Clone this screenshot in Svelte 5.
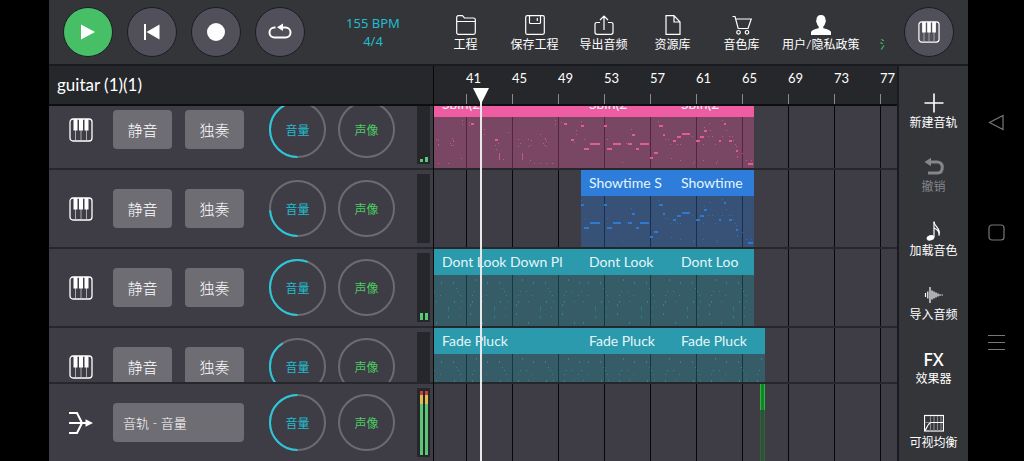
<script lang="ts">
  type Note = number[];

  let selectedTrack = "guitar (1)(1)";
  let playing = false;

  const bars = [41, 45, 49, 53, 57, 61, 65, 69, 73, 77];

  // x, y, width, height inside a clip
  const introNotes: Note[] = [
    [28, 29], [28, 33], [35, 31], [37, 32, 3], [35, 34], [121, 29], [121, 33],
    [127, 31], [130, 32, 3], [2, 48], [4, 49], [4, 53, 1, 2], [16, 52], [18, 47],
    [19, 49, 1, 2], [19, 54], [17, 54], [50, 38], [50, 43], [61, 48, 3],
    [64, 52], [61, 54], [62, 58], [65, 62, 1, 7], [69, 68], [74, 41], [84, 48],
    [86, 52], [84, 55], [94, 48], [97, 49], [96, 54], [94, 55], [88, 62, 1, 7],
    [96, 69], [109, 52], [111, 47, 1, 2], [112, 50], [112, 55], [110, 54],
    [106, 43], [137, 48, 3], [140, 51], [142, 39], [142, 43], [4, 72], [14, 72],
    [27, 67], [100, 72], [106, 72], [112, 72], [118, 72],
  ];
  const verseNotes: Note[] = [
    [0, 30], [0, 34, 3], [23, 34, 3], [51, 43, 3], [9, 52, 10], [32, 52, 8],
    [45, 52], [47, 52, 4], [59, 52, 9], [3, 57, 5], [26, 57, 5], [55, 57, 3],
    [73, 61, 4], [69, 66, 3], [77, 30], [78, 34, 4], [82, 43, 2], [84, 48],
    [87, 48], [89, 53], [90, 67], [41, 71], [50, 38], [3, 48], [26, 48],
  ];
  const endNotes: Note[] = [
    [0, 49, 3], [4, 45, 4], [4, 53], [7, 53], [9, 42, 8], [19, 45], [23, 49, 4],
    [27, 45, 4], [30, 53], [31, 39, 3], [31, 36], [36, 32], [37, 39], [35, 45],
    [39, 45], [42, 53], [46, 49, 2], [49, 45], [49, 29], [51, 32, 2], [53, 39],
    [56, 45], [59, 45], [56, 49, 3], [60, 49], [62, 53], [63, 55], [63, 59, 2],
    [64, 65, 1, 2], [69, 62], [75, 72, 5], [73, 69], [78, 69], [21, 70],
    [20, 72], [44, 70], [43, 72], [7, 69], [30, 69],
  ];
  const loopNotes: Note[] = [
    [7, 33, 1, 2], [19, 33, 1, 2], [42, 30, 1, 2], [22, 39], [0, 42], [24, 42],
    [40, 42], [6, 46], [26, 46], [38, 46], [2, 52], [20, 52, 1, 2], [27, 52],
    [38, 52, 1, 2], [14, 58, 1, 2], [25, 58], [36, 55, 1, 2], [2, 73, 1, 2],
    [14, 67, 1, 2], [25, 67], [36, 64, 1, 2], [14, 61],
  ];

  const repeat = (width: number): Note[] => {
    const notes: Note[] = [];
    for (let x = 0; x < width; x += 46) {
      for (const [nx, ...rest] of loopNotes) notes.push([nx + x, ...rest]);
    }
    return notes;
  };

  const tracks = [
    {
      volume: 0.45,
      levels: [3, 5],
      color: "pink",
      start: 0,
      clips: [
        { name: "Sbin(2", width: 147, notes: introNotes },
        { name: "Sbin(2", width: 92, notes: verseNotes },
        { name: "Sbin(2", width: 81, notes: endNotes },
      ],
    },
    {
      volume: 0.24,
      levels: [0, 0],
      color: "blue",
      start: 147,
      clips: [
        { name: "Showtime S", width: 92, notes: verseNotes },
        { name: "Showtime", width: 81, notes: endNotes },
      ],
    },
    {
      volume: 0.56,
      levels: [7, 7],
      color: "teal",
      start: 0,
      clips: [
        { name: "Dont Look Down Pl", width: 147, notes: repeat(147) },
        { name: "Dont Look", width: 92, notes: repeat(92) },
        { name: "Dont Loo", width: 81, notes: repeat(81) },
      ],
    },
    {
      volume: 0.41,
      levels: [0, 0],
      color: "teal",
      start: 0,
      clips: [
        { name: "Fade Pluck", width: 147, notes: repeat(147) },
        { name: "Fade Pluck", width: 92, notes: repeat(92) },
        { name: "Fade Pluck", width: 92, notes: repeat(92) },
      ],
    },
  ];

  const menu = [
    { icon: "folder", label: "工程" },
    { icon: "save", label: "保存工程" },
    { icon: "export", label: "导出音频" },
    { icon: "file", label: "资源库" },
    { icon: "cart", label: "音色库" },
    { icon: "user", label: "用户/隐私政策" },
  ];

  const tools = [
    { icon: "plus", label: "新建音轨" },
    { icon: "undo", label: "撤销", disabled: true },
    { icon: "note", label: "加载音色" },
    { icon: "wave", label: "导入音频" },
    { icon: "fx", label: "效果器" },
    { icon: "eq", label: "可视均衡" },
  ];
</script>

{#snippet piano(size: number)}
  <svg class="piano" viewBox="0 0 24 24" width={size} height={size}>
    <rect x="1" y="1" width="22" height="22" rx="3" fill="none" stroke="#fff" stroke-width="1.3" />
    <path d="M6.5 12v10M12 12v10M17.5 12v10" stroke="#aaa" stroke-width="1" />
    <path d="M4.5 1h4v11.500h-4zM10 1h4v11.500h-4zM15.500 1h4v11.500h-4z" fill="#fff" />
  </svg>
{/snippet}

{#snippet knob(label: string, kind: string, value: number)}
  <label class="knob {kind}">
    <input type="range" min="0" max="1" step="0.01" {value} />
    <svg viewBox="0 0 57 57" width="57" height="57">
      <circle cx="28.5" cy="28.5" r="27.5" />
      {#if value > 0}
        <circle
          class="arc"
          cx="28.5"
          cy="28.5"
          r="27.5"
          pathLength="100"
          stroke-dasharray="{value * 100} 100"
          transform="rotate(90 28.5 28.5)"
        />
      {/if}
    </svg>
    <span>{label}</span>
  </label>
{/snippet}

{#snippet icon(name: string)}
  <svg class="icon" viewBox="0 0 20 20" width="20" height="20">
    {#if name === "folder"}
      <path d="M.7 17.500V2.500Q.7.700 2.500.700H6.500L8.500 3H17.500Q19.300 3 19.300 4.800V17.500Q19.300 19.300 17.500 19.300H2.500Q.7 19.300.7 17.500zM.7 6.500H19.300" />
    {:else if name === "save"}
      <rect x=".7" y=".7" width="18.600" height="18.600" rx="1.500" />
      <path d="M4.500.7V7.500Q4.500 8.500 5.500 8.500H14.500Q15.500 8.500 15.500 7.500V.7M12.300 3V6" />
    {:else if name === "export"}
      <path d="M6 7.500H3Q1 7.500 1 9.500V17.300Q1 19.300 3 19.300H17Q19 19.300 19 17.300V9.500Q19 7.500 17 7.500H14M10 15V1M6 5L10 1L14 5" />
    {:else if name === "file"}
      <path d="M3 .7H11L17 7V19.300H3zM11 .7V7H17" />
    {:else if name === "cart"}
      <path d="M.5 1.500H3L6.200 13.500H16L19.300 4H3.800" />
      <circle cx="6.500" cy="17.300" r="1.800" />
      <circle cx="15" cy="17.300" r="1.800" />
    {:else if name === "user"}
      <path class="solid" d="M10 0C13.200 0 14.700 2 14.500 5Q15.600 5.500 14.200 8.300Q13.600 10.500 12.300 11.500V13.300Q19.500 15 20 17V20H0V17Q.5 15 7.700 13.300V11.500Q6.400 10.500 5.800 8.300Q4.400 5.500 5.500 5C5.300 2 6.800 0 10 0z" />
    {:else if name === "plus"}
      <path d="M10 .5V19.500M.5 10H19.500" stroke-width="1.600" />
    {:else if name === "undo"}
      <path class="thick" d="M5 5H13.500Q18.300 5.500 18.300 10.300Q18.300 16 13.500 16H4" />
      <path class="solid" d="M.5 5L7 .8V9.200z" />
    {:else if name === "note"}
      <ellipse class="solid" cx="6.500" cy="16.800" rx="4" ry="2.600" transform="rotate(-18 6.500 16.800)" />
      <path d="M10 16V.5" />
      <path d="M10 1C10.500 6 17.500 7.500 15 14.500C15.600 10 12.500 8 10 7" />
    {:else if name === "wave"}
      <path d="M1.500 8V12M3.800 6.500V13.500M6 2V18M8 5.500V14.500M10 6.500V13.500M12 7.500V12.500M14 8.500V11.500M16 9.300V10.700M18.200 9.500V10.500" />
    {:else if name === "eq"}
      <rect x=".5" y="2.500" width="19" height="15.500" />
      <path class="faint" d="M6.500 3V18M10 3V18M13.500 3V18M17 3V18M1 9.500H19" />
      <path d="M1 17.500C3 15 4 9.500 7.500 9.500H19" />
    {/if}
  </svg>
{/snippet}

<div class="screen">
  <div class="app">
    <header class="topbar">
      <div class="transport">
        <button class="round play" aria-label="播放" on:click={() => (playing = !playing)}>
          <svg viewBox="0 0 24 24" width="24" height="24"><path d="M5 4.500L19 12L5 19.500z" fill="#fff" /></svg>
        </button>
        <button class="round" aria-label="回到开头">
          <svg viewBox="0 0 24 24" width="24" height="24"><path d="M4 4h2v16H4zM6.500 12L19.500 4.500v15z" fill="#fff" /></svg>
        </button>
        <button class="round" aria-label="录音">
          <svg viewBox="0 0 24 24" width="24" height="24"><circle cx="12" cy="12" r="9" fill="#fff" /></svg>
        </button>
        <button class="round" aria-label="循环">
          <svg viewBox="0 0 24 24" width="24" height="24">
            <path d="M7.500 7.500H6.500a5 5 0 0 0 0 10H17.500a5 5 0 0 0 0-10H13" fill="none" stroke="#fff" stroke-width="2" />
            <path d="M9 7.300L15 3.500v7.500z" fill="#fff" />
          </svg>
        </button>
      </div>

      <button class="tempo">
        <span>155 BPM</span>
        <span>4/4</span>
      </button>

      <nav class="menu">
        {#each menu as item}
          <button class="tool">
            {@render icon(item.icon)}
            <span>{item.label}</span>
          </button>
        {/each}
        <span class="more">氵</span>
      </nav>

      <button class="round" aria-label="键盘">{@render piano(22)}</button>
    </header>

    <main class="workspace">
      <section class="mixer">
        <h1 class="track-name">{selectedTrack}</h1>
        <div class="viewport">
          <div class="rows">
            {#each tracks as track}
              <div class="row strip">
                {@render piano(24)}
                <div class="switches">
                  <button class="switch">静音</button>
                  <button class="switch">独奏</button>
                </div>
                <div class="knobs">
                  {@render knob("音量", "volume", track.volume)}
                  {@render knob("声像", "pan", 0)}
                </div>
                <div class="meter">
                  {#each track.levels as level}
                    <i style="height: {level}px"></i>
                  {/each}
                </div>
              </div>
            {/each}
          </div>
        </div>
        <div class="bus strip">
          <svg viewBox="0 0 24 24" width="24" height="24">
            <path d="M0 2H8L13 12H18M0 12H13M0 22H8L13 12" fill="none" stroke="#fff" stroke-width="2" />
            <path d="M16.500 8.300L24 12L16.500 15.700z" fill="#fff" />
          </svg>
          <div class="switches">
            <button class="switch automation">音轨 - 音量</button>
          </div>
          <div class="knobs">
            {@render knob("音量", "volume", 0.5)}
            {@render knob("声像", "pan", 0)}
          </div>
          <div class="meter">
            <i class="full"></i>
            <i class="full"></i>
          </div>
        </div>
      </section>

      <section class="timeline">
        <div class="ruler">
          {#each bars as bar}
            <span class="bar">{bar}</span>
          {/each}
        </div>
        <div class="viewport lines">
          <div class="rows">
            {#each tracks as track}
              <div class="row lane {track.color}" style="padding-left: {track.start}px">
                {#each track.clips as clip}
                  <div class="clip" style="width: {clip.width}px">
                    <span class="clip-name">{clip.name}</span>
                    <svg class="notes" width={clip.width} height="77">
                      {#each clip.notes as [x, y, w = 1, h = 1]}
                        <rect {x} {y} width={w} height={w > 1 ? 2 : h} opacity={w > 1 ? 0.9 : 0.65} />
                      {/each}
                    </svg>
                  </div>
                {/each}
              </div>
            {/each}
          </div>
        </div>
        <div class="bus lines">
          <div class="automation-clip"></div>
        </div>
        <div class="playhead">
          <svg viewBox="0 0 16 16" width="16" height="16"><path d="M0 0H16L8 16z" fill="#fff" /></svg>
        </div>
      </section>

      <aside class="sidebar">
        {#each tools as item}
          <button class="tool" disabled={item.disabled}>
            {#if item.icon === "fx"}
              <strong>FX</strong>
            {:else}
              {@render icon(item.icon)}
            {/if}
            <span>{item.label}</span>
          </button>
        {/each}
      </aside>
    </main>
  </div>

  <nav class="system">
    <button aria-label="返回">
      <svg viewBox="0 0 17 17" width="17" height="17"><path d="M15 1.500V15.500L1.500 8.500z" /></svg>
    </button>
    <button aria-label="主页">
      <svg viewBox="0 0 17 17" width="17" height="17"><rect x="1" y="1" width="15" height="15" rx="3" /></svg>
    </button>
    <button aria-label="最近任务">
      <svg viewBox="0 0 17 17" width="17" height="17"><path d="M0 1.500H17M0 8.500H17M0 15.500H17" /></svg>
    </button>
  </nav>
</div>

<style>
  :global(body) {
    background: #000;
  }

  .screen {
    display: flex;
    height: 100vh;
    padding-left: 49px;
    color: #fff;
    font-family: Lato, "Noto Sans CJK SC", sans-serif;
    box-sizing: border-box;
    overflow: hidden;
  }

  button {
    padding: 0;
    border: 0;
    background: none;
    color: inherit;
    font: inherit;
    cursor: pointer;
  }

  svg {
    display: block;
    flex: none;
  }

  .app {
    flex: 1;
    min-width: 0;
    display: flex;
    flex-direction: column;
    background: #343539;
  }

  .topbar {
    display: flex;
    align-items: center;
    height: 64px;
    padding: 0 14px;
    border-bottom: 2px solid #1a1b22;
  }

  .transport {
    display: flex;
    gap: 14px;
  }

  .round {
    display: flex;
    align-items: center;
    justify-content: center;
    flex: none;
    width: 50px;
    height: 50px;
    border: 1px solid #1b1b24;
    border-radius: 50%;
    background: #504f5a;
    box-sizing: border-box;
  }

  .play {
    background: #47bf66;
  }

  .tempo {
    width: 116px;
    margin-left: 10px;
    color: #22bccf;
    font-family: "Noto Sans", "Noto Sans CJK SC", sans-serif;
    font-size: 13px;
    line-height: 18px;
  }

  .tempo span {
    display: block;
  }

  .menu {
    flex: 1;
    min-width: 0;
    display: flex;
    padding-top: 6px;
    overflow: hidden;
  }

  .menu .tool {
    flex: none;
    min-width: 69px;
    padding: 0 6px;
    box-sizing: border-box;
  }

  .more {
    align-self: flex-end;
    width: 6px;
    margin-left: 14px;
    color: #47bf66;
    font-size: 12px;
    line-height: 20px;
    overflow: hidden;
  }

  .tool {
    display: flex;
    flex-direction: column;
    align-items: center;
    font-size: 12px;
    line-height: 20px;
    white-space: nowrap;
  }

  .tool:disabled {
    color: #85858a;
  }

  .tool strong {
    height: 20px;
    font-family: "Noto Sans", sans-serif;
    font-size: 18px;
    font-weight: 500;
  }

  .icon {
    fill: none;
    stroke: currentColor;
    stroke-width: 1.2;
  }

  .icon .solid {
    fill: currentColor;
    stroke: none;
  }

  .icon .thick {
    stroke-width: 3;
  }

  .icon .faint {
    stroke: #85858a;
  }

  .workspace {
    flex: 1;
    min-height: 0;
    display: flex;
  }

  .mixer,
  .timeline {
    display: flex;
    flex-direction: column;
    background: #3e3c44;
  }

  .mixer {
    flex: none;
    width: 384px;
    border-right: 1px solid #08080a;
  }

  .track-name,
  .ruler {
    flex: none;
    height: 38px;
    border-bottom: 2px solid #0e0e12;
    background: #26272b;
  }

  .track-name {
    margin: 0;
    padding-left: 8px;
    font-size: 17px;
    font-weight: 400;
    line-height: 38px;
  }

  .viewport {
    flex: 1;
    min-height: 0;
    overflow: hidden;
  }

  /* list is scrolled part of a row down */
  .rows {
    margin-top: -15px;
  }

  .row {
    height: 77px;
    border-bottom: 2px solid #26272b;
  }

  .bus {
    flex: none;
    height: 77px;
    border-top: 2px solid #26272b;
  }

  .strip {
    display: flex;
    align-items: center;
    padding: 0 3px 0 20px;
  }

  .switches {
    display: flex;
    gap: 13px;
    margin-left: 20px;
  }

  .switch {
    width: 59px;
    height: 39px;
    border-radius: 4px;
    background: #6e6d73;
    font-size: 15px;
    font-weight: 300;
  }

  .automation {
    width: 131px;
    padding-left: 10px;
    font-size: 13px;
    text-align: left;
  }

  .knobs {
    display: flex;
    gap: 12px;
    margin-left: 25px;
  }

  .knob {
    position: relative;
    display: grid;
    place-items: center;
    font-size: 12px;
  }

  .knob > * {
    grid-area: 1 / 1;
  }

  .knob input {
    width: 57px;
    margin: 0;
    opacity: 0;
  }

  .knob circle {
    fill: none;
    stroke: #6d6b70;
    stroke-width: 2;
  }

  .knob .arc {
    stroke: #28c8dc;
  }

  .volume {
    color: #22bccf;
  }

  .pan {
    color: #4ccb63;
  }

  .meter {
    align-self: stretch;
    display: flex;
    align-items: flex-end;
    justify-content: center;
    gap: 2px;
    width: 13px;
    margin: 4px 0 4px auto;
    padding: 3px 0 2px;
    background: #26272b;
    box-sizing: border-box;
  }

  .meter i {
    width: 3px;
    background: #5bc675;
  }

  .meter .full {
    height: 100%;
    background: linear-gradient(#c8413f 4px, #e2bd52 4px 13px, #5bc675 13px);
  }

  .timeline {
    position: relative;
    flex: 1;
    min-width: 0;
    overflow: hidden;
  }

  .ruler {
    display: flex;
    padding-left: 32px;
  }

  .bar {
    flex: none;
    width: 46px;
    height: 38px;
    background: linear-gradient(#8a8a8e, #8a8a8e) 0 100% / 1px 10px no-repeat;
    font-size: 13px;
    line-height: 24px;
  }

  .lines {
    background-image: linear-gradient(90deg, #08080a 1px, transparent 1px);
    background-size: 46px 100%;
    background-position: 32px 0;
  }

  .lane {
    display: flex;
  }

  .clip {
    position: relative;
    flex: none;
    height: 77px;
    overflow: hidden;
  }

  .clip::before {
    content: "";
    position: absolute;
    inset: 26px 0 0;
    background: var(--clip);
    opacity: 0.34;
  }

  .clip-name {
    display: block;
    height: 26px;
    padding-left: 8px;
    background: var(--clip);
    color: #e4f6fa;
    font-size: 14px;
    line-height: 26px;
    white-space: nowrap;
  }

  .notes {
    position: absolute;
    inset: 0;
    fill: var(--clip);
  }

  .pink {
    --clip: #ee5da1;
  }

  .blue {
    --clip: #2f7ddb;
  }

  .teal {
    --clip: #2a9aac;
  }

  .bus.lines {
    padding-left: 326px;
  }

  .automation-clip {
    width: 5px;
    height: 77px;
    border: solid #35a04b;
    border-width: 0 1px;
    background: linear-gradient(#0d8a20 26px, #2c5238 26px);
    border-image: linear-gradient(#35b04b 26px, #35603f 26px) 1;
    box-sizing: border-box;
  }

  .playhead {
    position: absolute;
    top: 22px;
    bottom: 0;
    left: 39px;
    width: 16px;
    background: linear-gradient(#e8e8ea, #e8e8ea) 50% 0 / 2px 100% no-repeat;
  }

  .sidebar {
    flex: none;
    display: flex;
    flex-direction: column;
    gap: 24px;
    width: 71px;
    padding-top: 27px;
    border-left: 2px solid #1a1b22;
    box-sizing: border-box;
  }

  .system {
    display: flex;
    flex-direction: column;
    align-items: center;
    justify-content: center;
    gap: 93px;
    width: 56px;
    padding-top: 4px;
    box-sizing: border-box;
  }

  .system svg {
    fill: none;
    stroke: #77777a;
    stroke-width: 1.2;
  }
</style>
